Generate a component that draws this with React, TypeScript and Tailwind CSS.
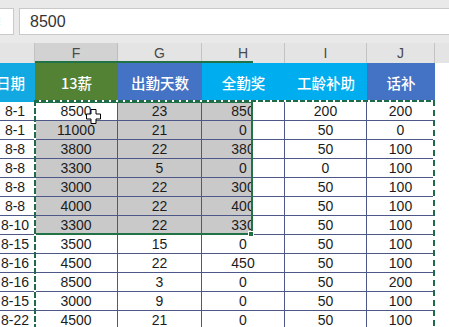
import React from "react";

const rows = [
  ["8-1", "8500", "23", "850", "200", "200"],
  ["8-1", "11000", "21", "0", "50", "0"],
  ["8-8", "3800", "22", "380", "50", "100"],
  ["8-8", "3300", "5", "0", "0", "100"],
  ["8-8", "3000", "22", "300", "50", "100"],
  ["8-8", "4000", "22", "400", "50", "100"],
  ["8-10", "3300", "22", "330", "50", "100"],
  ["8-15", "3500", "15", "0", "50", "100"],
  ["8-16", "4500", "22", "450", "50", "100"],
  ["8-16", "8500", "3", "0", "50", "200"],
  ["8-15", "3000", "9", "0", "50", "100"],
  ["8-22", "4500", "21", "0", "50", "100"],
];

const grid = "border-r border-b border-[#4d5889]";
const gray = "bg-[#c9c9c9]";

const DataRow = ({ r, i }: { r: string[]; i: number }) => {
  const sel = i < 7;
  return (
    <div className="flex h-[19px] leading-[18px] text-[14px] text-[#1c1c1c]">
      <div className={`w-[35px] shrink-0 overflow-hidden ${grid}`}>
        <div className="w-[70px] -ml-[20px] text-center">{r[0]}</div>
      </div>
      <div className={`w-[83px] shrink-0 text-center ${grid} ${sel && i > 0 ? gray : ""}`}>{r[1]}</div>
      <div className={`w-[84px] shrink-0 text-center ${grid} ${sel ? gray : ""}`}>{r[2]}</div>
      <div className={`w-[83px] shrink-0 flex ${grid}`}>
        {sel ? (
          <div className={`w-[49px] overflow-hidden ${gray}`}>
            <div className="w-[82px] text-center">{r[3]}</div>
          </div>
        ) : (
          <div className="w-full text-center">{r[3]}</div>
        )}
      </div>
      <div className={`w-[82px] shrink-0 text-center ${grid}`}>{r[4]}</div>
      <div className={`w-[68px] shrink-0 text-center ${grid}`}>{r[5]}</div>
      <div className="w-[14px] shrink-0" />
    </div>
  );
};

const Cursor = () => (
  <svg width="15" height="15" viewBox="0 0 15 15" className="absolute left-[86px] top-[109px]">
    <path d="M5 0.5H10V5H14.5V10H10V14.5H5V10H0.5V5H5Z" fill="#fff" stroke="#000" strokeWidth="1" />
  </svg>
);

export default function App() {
  return (
    <div className="relative w-[449px] h-[327px] overflow-hidden bg-white font-['Liberation_Sans','Noto_Sans_CJK_SC',sans-serif]">
      {/* formula bar */}
      <div className="flex h-[43px] bg-[#e9e9e9] pt-[8px]">
        <div className="w-[14px] h-[27px] bg-white border border-l-0 border-[#c9c9c9] text-[10px] leading-[25px] text-[#8a8a8a] -indent-[2px]">
          ⁝
        </div>
        <div className="flex-1 ml-[5px] h-[27px] bg-white border border-r-0 border-[#c9c9c9] pl-[10px] text-[16px] leading-[25px] text-[#333]">
          8500
        </div>
      </div>

      {/* column letters */}
      <div className="flex h-[20px] bg-[#e4e4e4] text-[14px] leading-[20px] text-[#4a4a4a]">
        <div className="w-[35px] shrink-0 border-r border-[#c3c3c3]" />
        <div className="w-[83px] shrink-0 text-center bg-[#d2d2d2] border-r border-[#bdbdbd]">F</div>
        <div className="w-[84px] shrink-0 text-center border-r border-[#c3c3c3]">G</div>
        <div className="w-[83px] shrink-0 text-center border-r border-[#c3c3c3]">H</div>
        <div className="w-[82px] shrink-0 text-center border-r border-[#c3c3c3]">I</div>
        <div className="w-[68px] shrink-0 text-center border-r border-[#c3c3c3]">J</div>
        <div className="w-[14px] shrink-0" />
      </div>

      {/* colored header row */}
      <div className="flex h-[39px] leading-[39px] text-[14.5px] text-white font-medium font-['Noto_Sans_CJK_SC',sans-serif]">
        <div className="w-[35px] shrink-0 bg-[#12a9e3] flex justify-end pr-[10px] overflow-hidden whitespace-nowrap">日期</div>
        <div className="w-[83px] shrink-0 bg-[#548235] text-center">13薪</div>
        <div className="w-[84px] shrink-0 bg-[#4472c4] text-center">出勤天数</div>
        <div className="w-[83px] shrink-0 bg-[#00adee] text-center">全勤奖</div>
        <div className="w-[82px] shrink-0 bg-[#00adee] text-center">工龄补助</div>
        <div className="w-[68px] shrink-0 bg-[#4472c4] text-center">话补</div>
        <div className="w-[14px] shrink-0 bg-white" />
      </div>

      {/* data */}
      <div className="flex flex-col">
        {rows.map((r, i) => (
          <DataRow key={i} r={r} i={i} />
        ))}
      </div>

      {/* column-letter selection underline */}
      <div className="absolute left-[35px] top-[61px] w-[218px] h-[2px] bg-[#217346]" />

      {/* selection box */}
      <div className="absolute left-[34px] top-[101px] w-[219px] h-[134px] border-2 border-[#217346]" />
      <div className="absolute left-[248px] top-[231px] w-[6px] h-[6px] bg-[#217346] border border-white" />

      {/* copy marquee */}
      <div className="absolute left-[34px] top-[100px] w-[401px] h-[2px] bg-[repeating-linear-gradient(90deg,#1f6b47_0_5px,#ffffff_5px_7px)]" />
      <div className="absolute left-[34px] top-[100px] w-[2px] h-[227px] bg-[repeating-linear-gradient(180deg,#1f6b47_0_6px,#ffffff_6px_8px)]" />
      <div className="absolute left-[433px] top-[100px] w-[2px] h-[227px] bg-[repeating-linear-gradient(180deg,#1f6b47_0_6px,#ffffff_6px_10px)]" />

      <Cursor />
    </div>
  );
}
